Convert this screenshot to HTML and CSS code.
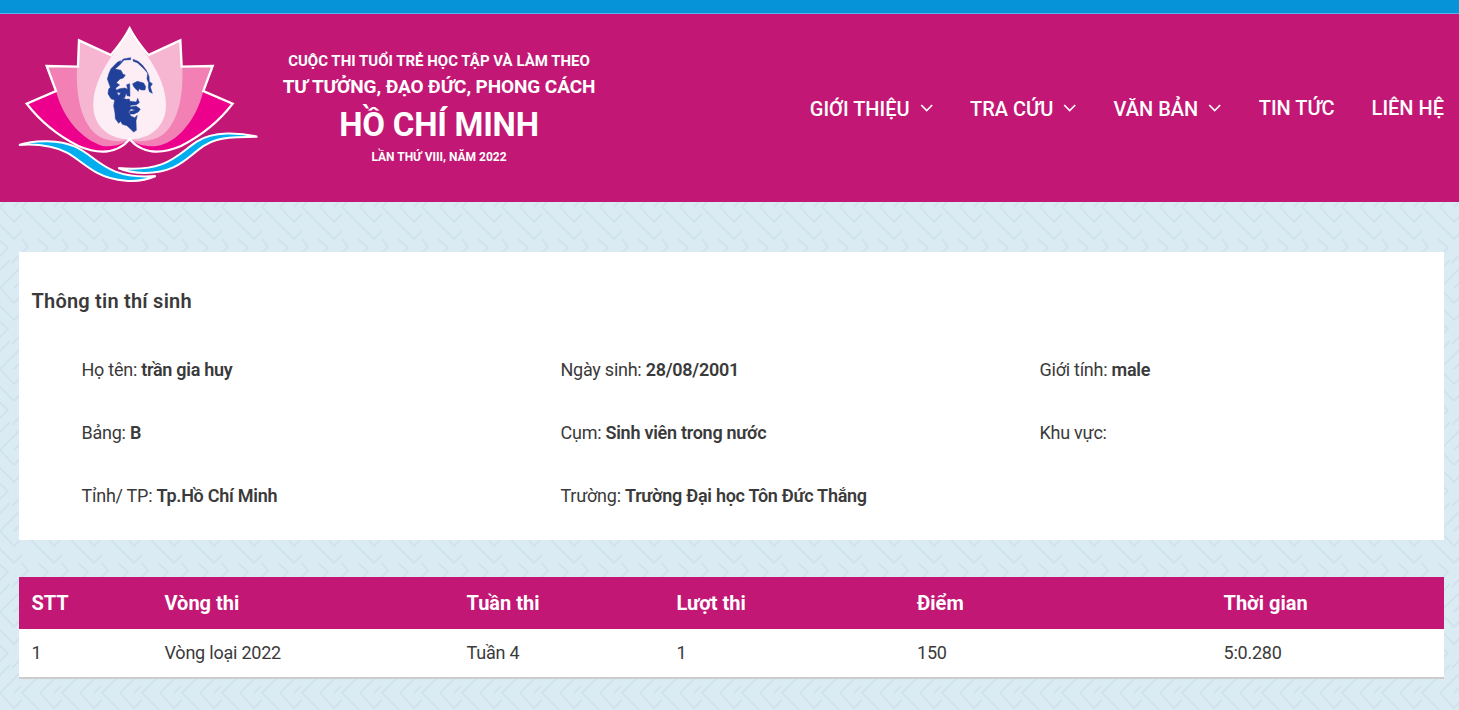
FILE: index.html
```html
<!DOCTYPE html>
<html lang="vi">
<head>
<meta charset="utf-8">
<title>Thông tin thí sinh</title>
<link rel="stylesheet" href="styles.css">
</head>
<body>
<svg class="pattern" aria-hidden="true">
  <defs>
    <pattern id="weave" width="40" height="81" patternUnits="userSpaceOnUse">
      <g id="col" class="weave-line">
        <path d="M50-23 22 5 54 37 62 29M59-14 40 5 54 20 62 12M54 5 61-2M22 37 28 45 12 61M38 37 48 46 38 56"/>
        <path d="M50 58 22 86 54 118M59 67 40 86 54 101M54 86 61 79"/>
      </g>
      <use href="#col" x="-40"/>
    </pattern>
  </defs>
  <rect width="100%" height="100%" fill="url(#weave)"/>
</svg>
<div class="topbar"></div>
<header class="header">
  <svg class="logo" viewBox="24 48 720 468">
    <path fill="#ec008c" d="M50 281 138 243 359 388 580 243 668 281C620 345 560 385 520 405 450 440 395 430 359 388 323 430 268 440 198 405 150 375 95 340 50 281Z"/>
    <path fill="#f280b4" d="M110 168 204 170 359 388 514 170 608 168 580 243C560 330 500 400 440 408 400 412 375 400 359 388 343 400 318 412 278 408 220 390 160 330 138 243Z"/>
    <path fill="#f6b6d2" d="M207 91 303 135 359 200 415 135 511 91 517 170C522 290 490 370 430 388 400 397 375 394 359 388 343 394 318 397 288 388 228 370 196 290 201 170Z"/>
    <path fill="#fdedf5" d="M359 55C385 110 468 190 468 285 468 350 420 388 359 388 298 388 250 350 250 285 250 190 333 110 359 55Z"/>
    <path class="petal-line" d="M359 388C323 430 268 435 205 408 150 380 95 340 50 281L138 243 110 168 204 170 207 91 303 135Q340 92 359 55 378 92 415 135L511 91 515 170 608 168 580 243 668 281C623 340 568 380 513 408 450 435 395 430 359 388Z"/>
    <path class="wave" d="M27 405C75 388 150 390 195 410 260 437 285 510 437 498 385 522 310 515 260 488 205 456 180 421 120 410 85 403 60 402 27 405Z"/>
    <path class="wave" d="M742 380C690 368 610 362 560 395 500 435 470 488 325 474 370 494 440 494 490 472 545 447 565 405 620 390 660 378 705 382 742 380Z"/>
    <path class="portrait" d="M303 176 322 157 332 152 330 158 340 147 362 143 362 149 342 150 329 165 315 177 333 181 339 193 346 195 340 204 330 207 319 218 329 225 317 234 319 241 329 236 345 234 353 238 350 224 359 221 360 259 351 257 349 248 344 263 332 264 326 259 332 248 320 247 328 260 349 268 358 267 360 274 379 276 383 265 388 278 379 284 362 286 360 291 378 288 391 297 385 306 372 312 359 312 359 304 376 301 363 296 356 306 362 318 374 323 382 316 378 332 379 361 371 366 351 347 337 343 332 334 326 340 316 326 315 310 311 287 314 270 303 266 294 251 296 237 301 232 292 207 297 190Z"/>
    <path class="portrait" d="M369 148 384 154 397 165 409 181 417 199 418 215 427 221 421 231 427 250 418 245 415 232 416 219 411 207 413 189 397 172 382 158 370 154Z"/>
    <path class="portrait" d="M368 221 382 214 401 219 407 230 405 240 395 240 387 236 385 244 375 235 370 228Z"/>
  </svg>
  <div class="title">
    <div class="t1">CUỘC THI TUỔI TRẺ HỌC TẬP VÀ LÀM THEO</div>
    <div class="t2">TƯ TƯỞNG, ĐẠO ĐỨC, PHONG CÁCH</div>
    <div class="t3">HỒ CHÍ MINH</div>
    <div class="t4">LẦN THỨ VIII, NĂM 2022</div>
  </div>
  <nav class="nav">
    <a class="drop">GIỚI THIỆU<svg class="chev" viewBox="0 0 13 8"><path d="M1 1 6.5 6.5 12 1"/></svg></a>
    <a class="drop">TRA CỨU<svg class="chev" viewBox="0 0 13 8"><path d="M1 1 6.5 6.5 12 1"/></svg></a>
    <a class="drop">VĂN BẢN<svg class="chev" viewBox="0 0 13 8"><path d="M1 1 6.5 6.5 12 1"/></svg></a>
    <a>TIN TỨC</a>
    <a>LIÊN HỆ</a>
  </nav>
</header>
<main class="main">
  <section class="card">
    <h2>Thông tin thí sinh</h2>
    <div class="info">
      <div>Họ tên: <b>trần gia huy</b></div>
      <div>Ngày sinh: <b>28/08/2001</b></div>
      <div>Giới tính: <b>male</b></div>
      <div>Bảng: <b>B</b></div>
      <div>Cụm: <b>Sinh viên trong nước</b></div>
      <div>Khu vực:</div>
      <div>Tỉnh/ TP: <b>Tp.Hồ Chí Minh</b></div>
      <div>Trường: <b>Trường Đại học Tôn Đức Thắng</b></div>
    </div>
  </section>
  <table class="results">
    <colgroup><col class="c1"><col class="c2"><col class="c3"><col class="c4"><col class="c5"><col></colgroup>
    <thead><tr><th>STT</th><th>Vòng thi</th><th>Tuần thi</th><th>Lượt thi</th><th>Điểm</th><th>Thời gian</th></tr></thead>
    <tbody><tr><td>1</td><td>Vòng loại 2022</td><td>Tuần 4</td><td>1</td><td>150</td><td>5:0.280</td></tr></tbody>
  </table>
</main>
</body>
</html>
```
FILE: styles.css
```css
* { box-sizing: border-box; }
body { margin: 0; height: 710px; overflow: hidden; background: #daebf4; color: #3a3a3a; font-family: Roboto, sans-serif; font-size: 18px; }
.pattern { position: absolute; z-index: -1; left: 0; top: 202px; width: 100%; height: 508px; }
.weave-line { fill: none; stroke: #d0e2eb; stroke-width: 1.8; }
.topbar { height: 14px; background: #0693d7; border-bottom: 1px solid #55b5ea; }
.header { height: 188px; background: #c21774; display: flex; align-items: flex-start; color: #fff; padding: 12px 15px 0 18px; }
.logo { width: 240px; height: 156px; }
.petal-line { fill: none; stroke: #fff; stroke-width: 7; }
.wave { fill: #00aeef; stroke: #fff; stroke-width: 6; }
.portrait { fill: #21409a; stroke: #21409a; stroke-width: 1.5; }
.title { width: 314px; margin-left: 24px; padding-top: 23px; text-align: center; font-weight: 700; white-space: nowrap; }
.t1 { font-size: 15px; line-height: 25px; }
.t2 { font-size: 19px; line-height: 26px; letter-spacing: -0.1px; }
.t3 { font-size: 33px; line-height: 49px; letter-spacing: -0.25px; }
.t4 { font-size: 12px; line-height: 16px; }
.nav { margin-left: auto; display: flex; gap: 37px; padding-top: 70px; font-size: 20px; line-height: 24px; font-weight: 500; white-space: nowrap; }
.drop { padding-top: 1px; }
.chev { width: 13.4px; height: 8px; margin-left: 10px; vertical-align: 4px; fill: none; stroke: #fff; stroke-width: 1.7; }
.main { padding: 50px 15px 0 19px; }
.card { height: 288px; background: #fff; padding: 34px 13px 0 12.5px; }
h2 { margin: 0; font-size: 20px; line-height: 30px; font-weight: 600; letter-spacing: 0.22px; }
.info { display: grid; grid-template-columns: 479px 479px 1fr; grid-auto-rows: 63px; line-height: 63px; margin: 22px 0 0 50px; letter-spacing: -0.25px; }
b { font-weight: 600; letter-spacing: -0.27px; }
.results { width: 1425px; margin-top: 37px; border-collapse: separate; border-spacing: 0; table-layout: fixed; background: #fff; }
.results th, .results td { text-align: left; padding: 0 0 0 12.5px; }
.results th { height: 52px; background: #c21774; color: #fff; font-size: 20px; font-weight: 700; }
.results td { height: 50px; padding-bottom: 2px; border-bottom: 2px solid #ccc; letter-spacing: -0.22px; }
.c1 { width: 133px; }
.c2 { width: 302px; }
.c3 { width: 210px; }
.c4 { width: 240.5px; }
.c5 { width: 306.5px; }
```
